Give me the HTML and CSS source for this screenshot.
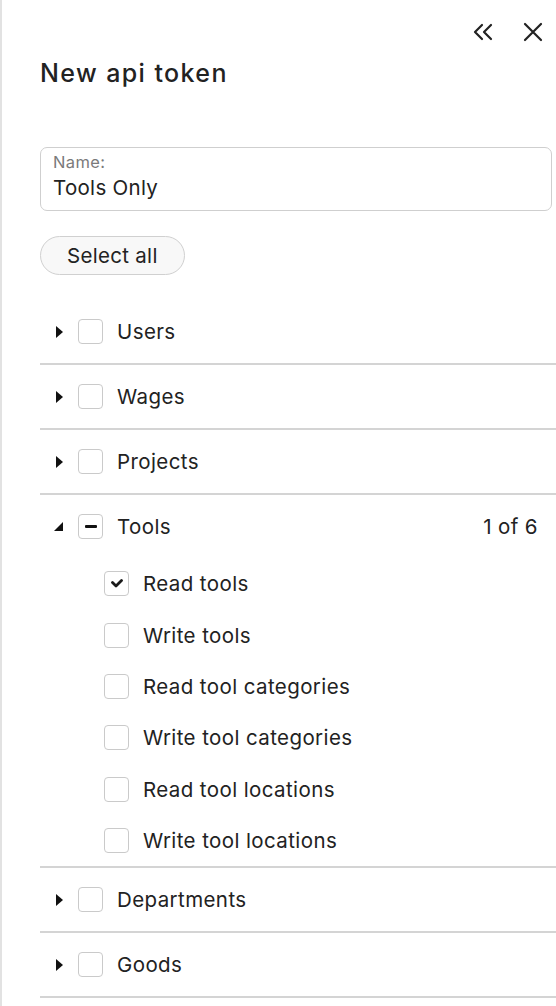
FILE: index.html
```html
<!DOCTYPE html>
<html lang="en">
<head>
  <meta charset="UTF-8" />
  <meta name="viewport" content="width=device-width, initial-scale=1.0"/>
  <title>New api token</title>
  <link rel="stylesheet" href="styles.css">
</head>
<body>
  <aside class="panel">
    <div class="panel-actions">
      <button class="icon-btn" title="Collapse">
        <svg width="22" height="18" viewBox="0 0 22 18"><path d="M9 2 L2 9 L9 16 M18 2 L11 9 L18 16" fill="none" stroke="#222" stroke-width="2.2" stroke-linecap="round" stroke-linejoin="round"/></svg>
      </button>
      <button class="icon-btn" title="Close">
        <svg width="20" height="20" viewBox="0 0 20 20"><path d="M2 2 L18 18 M18 2 L2 18" fill="none" stroke="#222" stroke-width="2.2" stroke-linecap="round"/></svg>
      </button>
    </div>

    <h1 class="panel-title">New api token</h1>

    <label class="field">
      <span class="field-label">Name:</span>
      <input class="field-input" type="text" value="Tools Only" />
    </label>

    <button class="select-all">Select all</button>

    <ul class="scope-list">
      <li class="scope">
        <div class="scope-head">
          <span class="caret"></span>
          <span class="box"></span>
          <span class="scope-name">Users</span>
        </div>
      </li>
      <li class="scope">
        <div class="scope-head">
          <span class="caret"></span>
          <span class="box"></span>
          <span class="scope-name">Wages</span>
        </div>
      </li>
      <li class="scope">
        <div class="scope-head">
          <span class="caret"></span>
          <span class="box"></span>
          <span class="scope-name">Projects</span>
        </div>
      </li>
      <li class="scope open">
        <div class="scope-head">
          <span class="caret caret-open"></span>
          <span class="box box-partial"><i></i></span>
          <span class="scope-name">Tools</span>
          <span class="scope-count">1 of 6</span>
        </div>
        <ul class="perm-list">
          <li class="perm">
            <span class="box box-checked">
              <svg width="14" height="10" viewBox="0 0 14 10"><path d="M2.5 3.5 L6 7 L11.5 1.5" fill="none" stroke="#1a1a1a" stroke-width="2.8" stroke-linecap="round" stroke-linejoin="round"/></svg>
            </span>
            <span>Read tools</span>
          </li>
          <li class="perm"><span class="box"></span><span>Write tools</span></li>
          <li class="perm"><span class="box"></span><span>Read tool categories</span></li>
          <li class="perm"><span class="box"></span><span>Write tool categories</span></li>
          <li class="perm"><span class="box"></span><span>Read tool locations</span></li>
          <li class="perm"><span class="box"></span><span>Write tool locations</span></li>
        </ul>
      </li>
      <li class="scope">
        <div class="scope-head">
          <span class="caret"></span>
          <span class="box"></span>
          <span class="scope-name">Departments</span>
        </div>
      </li>
      <li class="scope">
        <div class="scope-head">
          <span class="caret"></span>
          <span class="box"></span>
          <span class="scope-name">Goods</span>
        </div>
      </li>
    </ul>
  </aside>
</body>
</html>
```

FILE: styles.css
```css
body {
  margin: 0;
  padding: 0;
  background: #fff;
  font-family: 'Inter', 'Liberation Sans', sans-serif;
  color: #222;
  overflow: hidden;
}
.panel {
  min-height: 1006px;
  border-left: 2px solid #e2e2e2;
  padding: 18px 4px 0 38px;
  box-sizing: border-box;
}
.panel-actions {
  display: flex;
  justify-content: flex-end;
  gap: 28px;
  padding-right: 9px;
  height: 28px;
  align-items: center;
}
.icon-btn {
  background: none;
  border: none;
  padding: 0;
  display: flex;
  cursor: pointer;
}
.panel-title {
  font-size: 25px;
  font-weight: 500;
  letter-spacing: 1.4px;
  margin: 12px 0 0;
  line-height: 30px;
}
.field {
  display: flex;
  flex-direction: column;
  margin-top: 59px;
  height: 64px;
  box-sizing: border-box;
  border: 1px solid #cfcfcf;
  border-radius: 7px;
  padding: 3px 12px 0;
}
.field-label {
  font-size: 16.5px;
  letter-spacing: 0.4px;
  color: #7a7a7a;
  line-height: 22px;
}
.field-input {
  border: none;
  outline: none;
  padding: 0;
  margin-top: 2px;
  font-family: inherit;
  font-size: 20.5px;
  letter-spacing: 0.3px;
  color: #222;
  line-height: 26px;
  background: none;
}
.select-all {
  margin-top: 25px;
  height: 39px;
  padding: 0 26px;
  border: 1px solid #d0d0d0;
  border-radius: 20px;
  background: #f8f8f8;
  font-family: inherit;
  font-size: 20.5px;
  letter-spacing: 0.3px;
  color: #222;
}
.scope-list {
  list-style: none;
  margin: 25px -4px 0 0;
  padding: 0;
}
.scope {
  border-bottom: 2px solid #d4d4d4;
}
.scope-head {
  display: flex;
  align-items: center;
  height: 63px;
  font-size: 20.5px;
  letter-spacing: 0.4px;
}
.caret {
  width: 0;
  height: 0;
  margin-left: 16px;
  border-top: 6px solid transparent;
  border-bottom: 6px solid transparent;
  border-left: 7px solid #111;
}
.caret-open {
  margin-left: 14px;
  border: none;
  width: 9px;
  height: 9px;
  background: #111;
  clip-path: polygon(100% 0, 100% 100%, 0 100%);
}
.box {
  width: 25px;
  height: 25px;
  box-sizing: border-box;
  border: 1px solid #cacaca;
  border-radius: 4px;
  margin-left: 15px;
  display: flex;
  align-items: center;
  justify-content: center;
  flex-shrink: 0;
}
.box-partial i {
  width: 12px;
  height: 3px;
  border-radius: 1px;
  background: #111;
}
.scope-name {
  margin-left: 14px;
}
.scope-count {
  margin-left: auto;
  margin-right: 18px;
}
.perm-list {
  list-style: none;
  margin: 0;
  padding: 0 0 0 64px;
}
.perm {
  display: flex;
  align-items: center;
  height: 51.4px;
  font-size: 20.5px;
  letter-spacing: 0.4px;
}
.perm .box {
  margin-left: 0;
  margin-right: 14px;
}
```
